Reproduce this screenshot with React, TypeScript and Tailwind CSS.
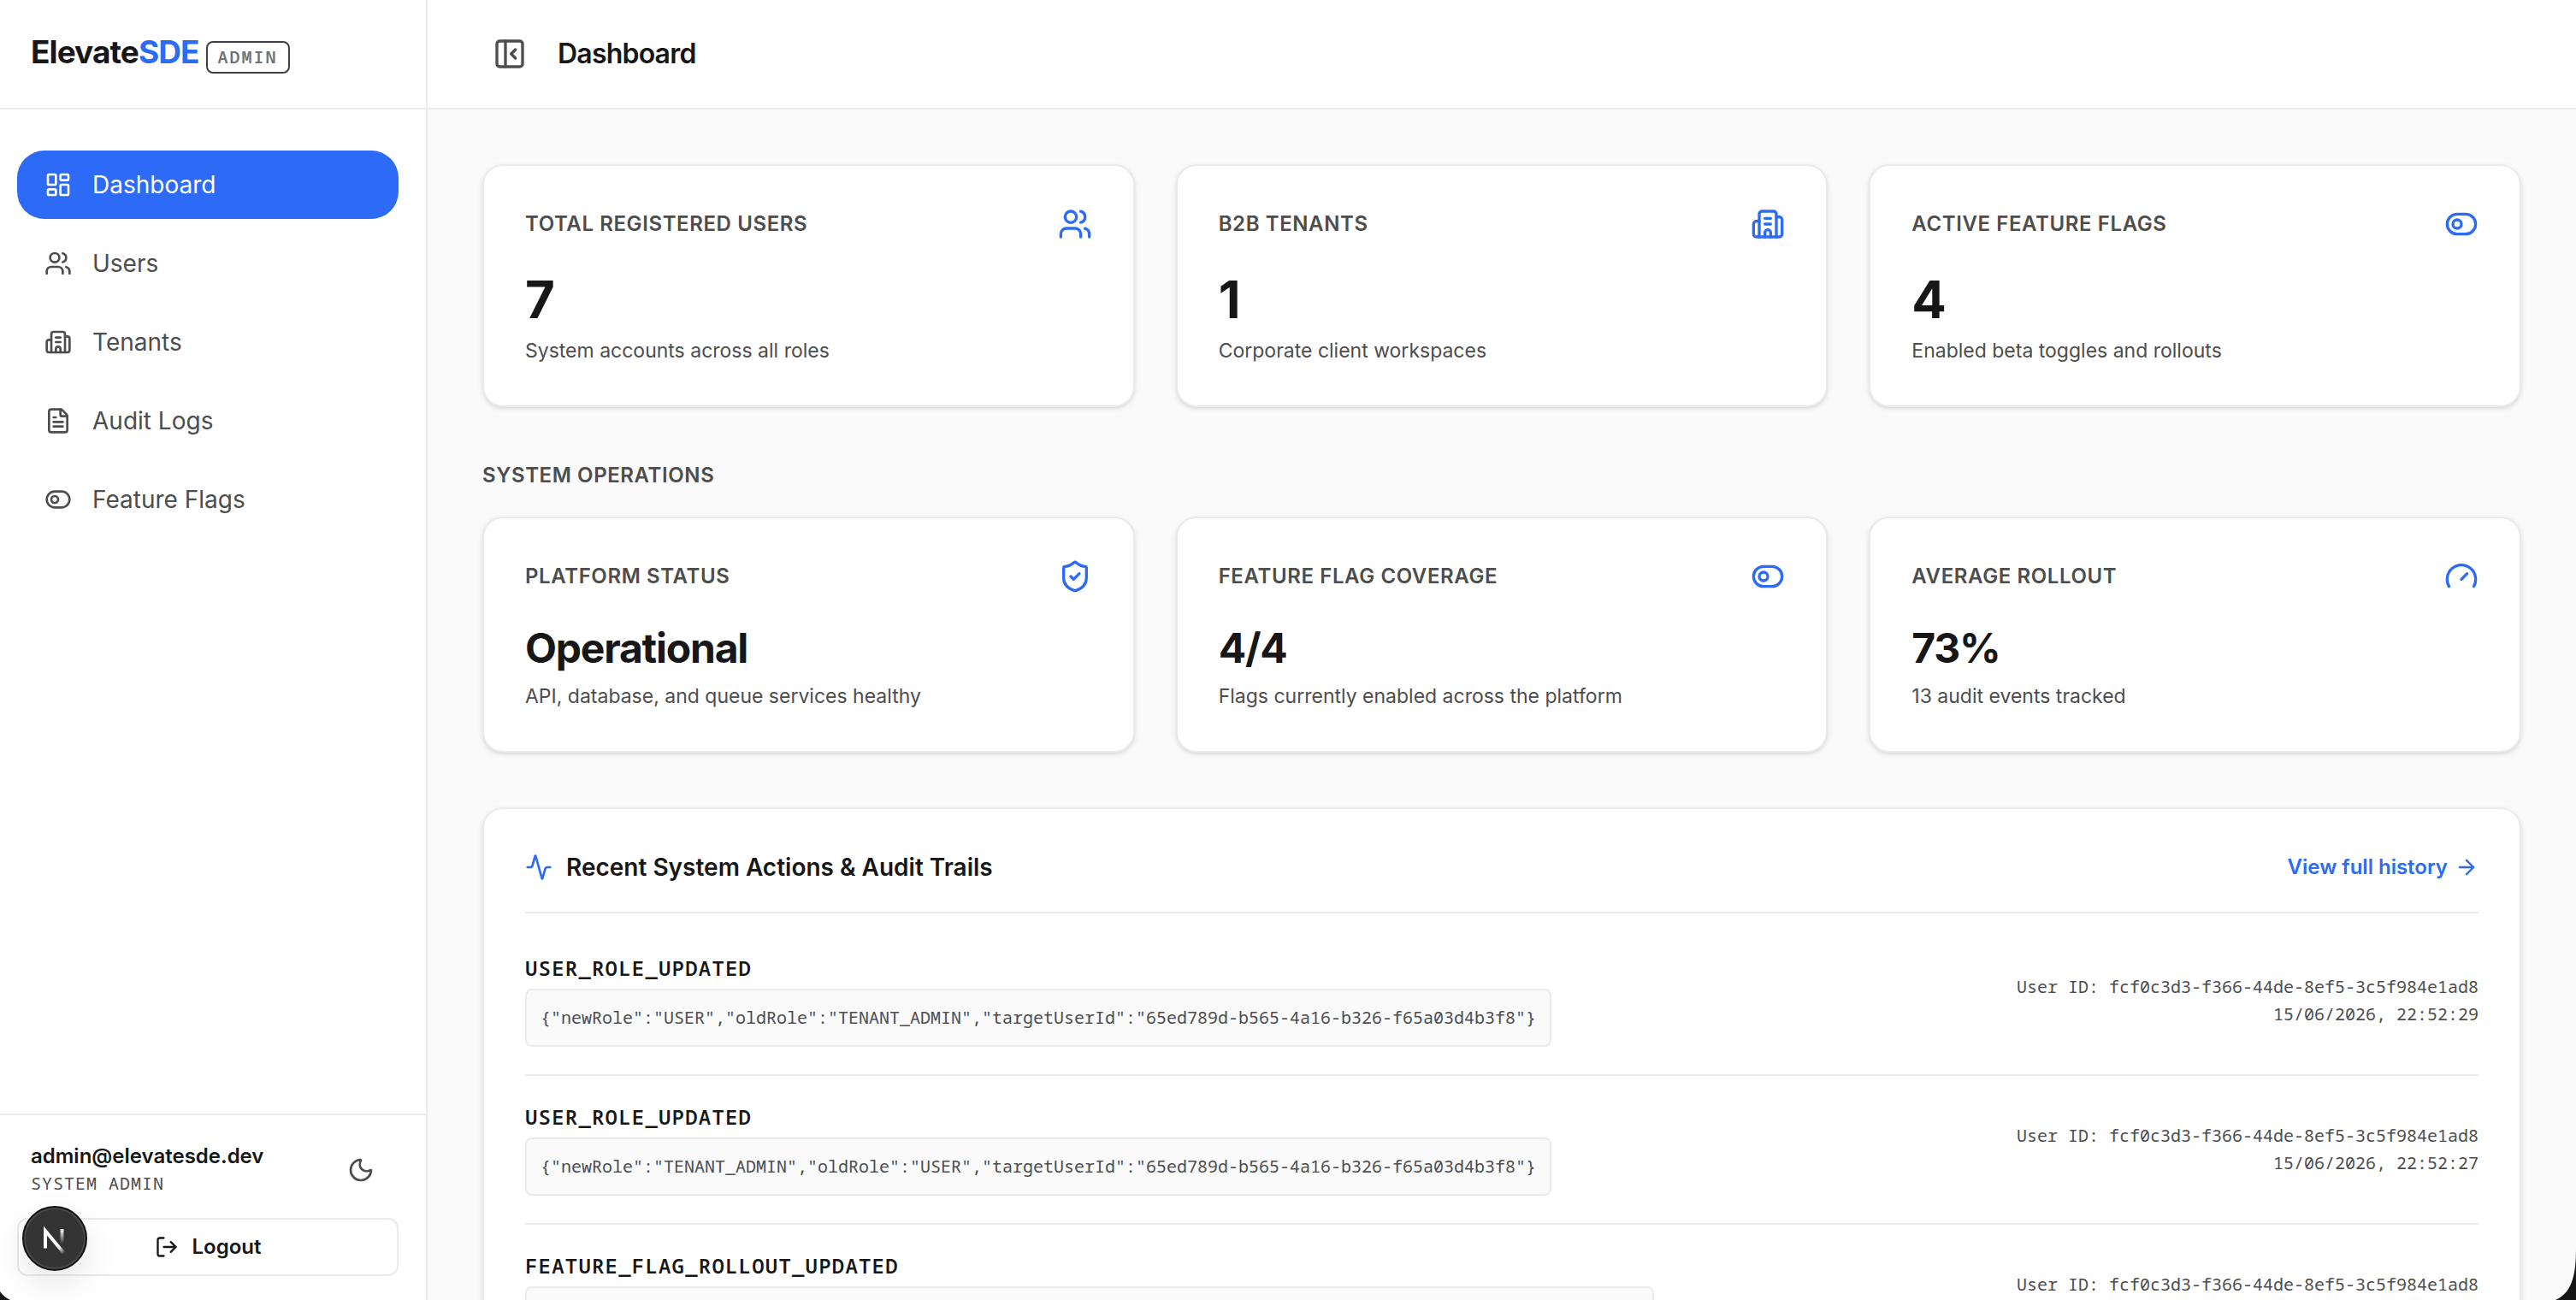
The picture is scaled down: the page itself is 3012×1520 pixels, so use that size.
import React, { useState } from "react";
import {
  Activity,
  ArrowRight,
  Building2,
  FileText,
  Gauge,
  LayoutDashboard,
  LogOut,
  Moon,
  PanelLeftClose,
  ShieldCheck,
  ToggleLeft,
  Users,
  type LucideIcon,
} from "lucide-react";

const navItems = [
  { label: "Dashboard", icon: LayoutDashboard },
  { label: "Users", icon: Users },
  { label: "Tenants", icon: Building2 },
  { label: "Audit Logs", icon: FileText },
  { label: "Feature Flags", icon: ToggleLeft },
];

const auditLogs = [
  {
    id: 1,
    action: "USER_ROLE_UPDATED",
    details:
      '{"newRole":"USER","oldRole":"TENANT_ADMIN","targetUserId":"65ed789d-b565-4a16-b326-f65a03d4b3f8"}',
    userId: "fcf0c3d3-f366-44de-8ef5-3c5f984e1ad8",
    date: "15/06/2026, 22:52:29",
  },
  {
    id: 2,
    action: "USER_ROLE_UPDATED",
    details:
      '{"newRole":"TENANT_ADMIN","oldRole":"USER","targetUserId":"65ed789d-b565-4a16-b326-f65a03d4b3f8"}',
    userId: "fcf0c3d3-f366-44de-8ef5-3c5f984e1ad8",
    date: "15/06/2026, 22:52:27",
  },
  {
    id: 3,
    action: "FEATURE_FLAG_ROLLOUT_UPDATED",
    details:
      '{"flagKey":"new_dashboard","oldRollout":50,"newRollout":73,"flagId":"0b1e5a52-7c1d-4e5b-9a60-2f4c8d1e7a93"}',
    userId: "fcf0c3d3-f366-44de-8ef5-3c5f984e1ad8",
    date: "15/06/2026, 22:51:48",
  },
];

type StatCardProps = {
  title: string;
  value: string;
  description: string;
  icon: LucideIcon;
  large?: boolean;
};

const StatCard = ({ title, value, description, icon: Icon, large }: StatCardProps) => (
  <div className="bg-white border-2 border-[#eaeaea] rounded-3xl shadow-[0_2px_6px_rgba(0,0,0,0.1),0_2px_4px_-2px_rgba(0,0,0,0.1)] p-12">
    <div className="flex items-center justify-between mb-8">
      <h3 className="text-[24px] leading-8 font-semibold uppercase tracking-wide text-[#4d4d4d]">
        {title}
      </h3>
      <Icon className="size-10 text-[#2d6bf7]" />
    </div>
    <p
      className={
        large
          ? "text-[60px] leading-[72px] font-bold tracking-tight"
          : "text-[48px] leading-[64px] font-bold tracking-tight"
      }
    >
      {value}
    </p>
    <p className="mt-2 text-[23px] leading-8 text-[#4d4d4d]">{description}</p>
  </div>
);

const Sidebar = () => {
  const [active, setActive] = useState("Dashboard");

  return (
    <aside className="w-[500px] shrink-0 flex flex-col bg-white border-r-2 border-[#eaeaea]">
      <div className="h-32 shrink-0 flex items-center px-9 border-b-2 border-[#eaeaea]">
        <div className="flex items-baseline gap-2">
          <span className="text-[37px] leading-10 font-bold tracking-tight">
            Elevate<span className="text-[#2d6bf7]">SDE</span>
          </span>
          <span className="px-3 py-1 border-2 border-[#3f3f46] rounded-lg font-['Noto_Sans_Mono','Liberation_Mono',monospace] text-[20px] leading-[26px] font-semibold tracking-widest text-[#71717b]">
            ADMIN
          </span>
        </div>
      </div>

      <nav className="flex-1 flex flex-col gap-3 pl-5 pr-8 pt-12">
        {navItems.map(({ label, icon: Icon }) => (
          <a
            key={label}
            href="#"
            onClick={() => setActive(label)}
            className={`flex items-center gap-6 h-20 px-8 rounded-[32px] text-[28px] ${
              active === label ? "bg-[#2d6bf7] text-white" : "text-[#4d4d4d]"
            }`}
          >
            <Icon className="size-8" />
            {label}
          </a>
        ))}
      </nav>

      <div className="border-t-2 border-[#eaeaea] pl-5 pr-8 pt-8 pb-7">
        <div className="flex items-center justify-between px-4 mb-6">
          <div>
            <p className="text-[24px] leading-8 font-semibold">admin@elevatesde.dev</p>
            <p className="font-['Noto_Sans_Mono','Liberation_Mono',monospace] text-[20px] leading-8 tracking-wider text-[#4d4d4d]">
              SYSTEM ADMIN
            </p>
          </div>
          <button type="button" aria-label="Toggle theme" className="p-3 text-[#4d4d4d]">
            <Moon className="size-8" />
          </button>
        </div>
        <button
          type="button"
          className="w-full h-[68px] flex items-center justify-center gap-4 border-2 border-[#eaeaea] rounded-xl text-[24px] font-semibold"
        >
          <LogOut className="size-7" />
          Logout
        </button>
      </div>
    </aside>
  );
};

const DevBadge = () => (
  <button
    type="button"
    aria-label="Open dev tools"
    className="absolute left-[26px] bottom-[34px] size-19 rounded-full bg-[#333333] border-2 border-[#151515] shadow-[inset_0_0_0_2px_#4a4a4a,0_16px_40px_rgba(0,0,0,0.1)]"
  >
    <svg viewBox="0 0 72 72" fill="none" className="size-full">
      <defs>
        <linearGradient id="diagonal" x1="36" y1="38" x2="48" y2="53" gradientUnits="userSpaceOnUse">
          <stop stopColor="#fff" />
          <stop offset="0.5" stopColor="#fff" />
          <stop offset="1" stopColor="#fff" stopOpacity="0" />
        </linearGradient>
        <linearGradient id="stem" x1="45" y1="25" x2="45" y2="42" gradientUnits="userSpaceOnUse">
          <stop stopColor="#fff" />
          <stop offset="1" stopColor="#fff" stopOpacity="0" />
        </linearGradient>
      </defs>
      <path d="M25 47.500V27L46.500 53" stroke="url(#diagonal)" strokeWidth="4" />
      <path d="M44.500 25V42" stroke="url(#stem)" strokeWidth="4" />
    </svg>
  </button>
);

const App = () => {
  return (
    <div className="relative h-screen flex overflow-hidden bg-[#fafafa] font-['Inter',sans-serif] text-[#171717]">
      <Sidebar />

      <div className="flex-1 min-w-0 flex flex-col">
        <header className="h-32 shrink-0 flex items-center gap-9 px-19 bg-white border-b-2 border-[#eaeaea]">
          <button type="button" aria-label="Collapse sidebar" className="text-[#4d4d4d]">
            <PanelLeftClose className="size-10" />
          </button>
          <h1 className="text-[32px] leading-10 font-semibold tracking-tight">Dashboard</h1>
        </header>

        <main className="flex-1 min-h-0 overflow-y-auto [scrollbar-width:none] p-16 flex flex-col gap-16">
          <div className="grid grid-cols-3 gap-12">
            <StatCard
              large
              title="Total Registered Users"
              value="7"
              description="System accounts across all roles"
              icon={Users}
            />
            <StatCard
              large
              title="B2B Tenants"
              value="1"
              description="Corporate client workspaces"
              icon={Building2}
            />
            <StatCard
              large
              title="Active Feature Flags"
              value="4"
              description="Enabled beta toggles and rollouts"
              icon={ToggleLeft}
            />
          </div>

          <section>
            <h2 className="mb-8 text-[24px] leading-8 font-semibold uppercase tracking-wide text-[#4d4d4d]">
              System Operations
            </h2>
            <div className="grid grid-cols-3 gap-12">
              <StatCard
                title="Platform Status"
                value="Operational"
                description="API, database, and queue services healthy"
                icon={ShieldCheck}
              />
              <StatCard
                title="Feature Flag Coverage"
                value="4/4"
                description="Flags currently enabled across the platform"
                icon={ToggleLeft}
              />
              <StatCard
                title="Average Rollout"
                value="73%"
                description="13 audit events tracked"
                icon={Gauge}
              />
            </div>
          </section>

          <section className="shrink-0 bg-white border-2 border-[#eaeaea] rounded-3xl shadow-[0_2px_6px_rgba(0,0,0,0.1),0_2px_4px_-2px_rgba(0,0,0,0.1)] p-12">
            <div className="flex items-center justify-between pb-8 mb-4 border-b-2 border-[#eaeaea]">
              <h2 className="flex items-center gap-4 text-[28px] leading-10 font-semibold">
                <Activity className="size-8 text-[#2d6bf7]" />
                Recent System Actions &amp; Audit Trails
              </h2>
              <a
                href="#"
                className="flex items-center gap-2 text-[24px] leading-8 font-semibold text-[#2d6bf7]"
              >
                View full history
                <ArrowRight className="size-7" />
              </a>
            </div>

            <ul className="divide-y-2 divide-[#eaeaea]">
              {auditLogs.map((log) => (
                <li key={log.id} className="flex items-center justify-between py-8">
                  <div>
                    <p className="font-['Noto_Sans_Mono','Liberation_Mono',monospace] text-[24px] leading-8 font-semibold tracking-wider">
                      {log.action}
                    </p>
                    <p className="mt-2 px-4 py-4 bg-[#fafafa] border-2 border-[#eaeaea] rounded-lg font-['Noto_Sans_Mono','Liberation_Mono',monospace] text-[20px] leading-8 text-[#4d4d4d]">
                      {log.details}
                    </p>
                  </div>
                  <div className="text-right font-['Noto_Sans_Mono','Liberation_Mono',monospace] text-[20px] leading-8 text-[#4d4d4d]">
                    <p>User ID: {log.userId}</p>
                    <p>{log.date}</p>
                  </div>
                </li>
              ))}
            </ul>
          </section>
        </main>
      </div>

      <DevBadge />

      {/* rounded window corners */}
      <svg viewBox="0 0 12 10" className="absolute left-0 bottom-0 w-3 h-[10px]">
        <path d="M0 0Q4 6 12 10H0Z" fill="#151515" />
      </svg>
      <svg viewBox="0 0 24 60" className="absolute right-0 bottom-0 w-6 h-[60px]">
        <path d="M24 0C24 34 18 52 0 60H24Z" fill="#151515" />
      </svg>
    </div>
  );
};

export default App;
